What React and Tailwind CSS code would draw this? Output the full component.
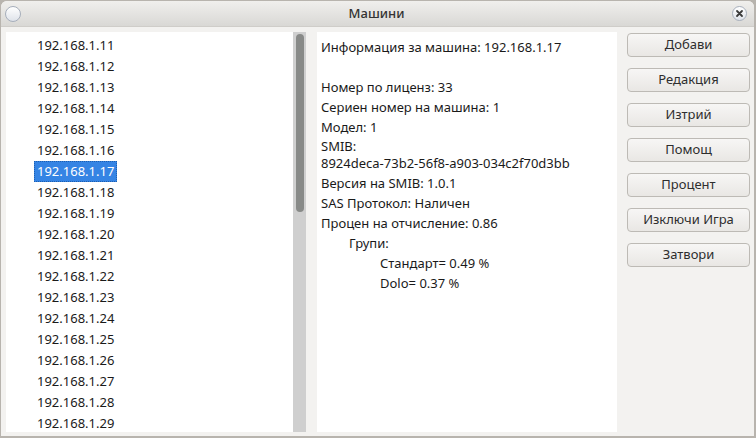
import React from "react";

const ips = Array.from({ length: 19 }, (_, i) => `192.168.1.${11 + i}`);
const buttons = ["Добави", "Редакция", "Изтрий", "Помощ", "Процент", "Изключи Игра", "Затвори"];

const App = () => {
  return (
    <div
      className="w-[756px] h-[438px] bg-[#b8b4ae] p-px pr-[2px] pb-[2px] text-[13px] text-[#1a1a1a]"
      style={{ fontFamily: '"Noto Sans", "Open Sans", sans-serif' }}
    >
      <div className="w-full h-full flex flex-col bg-[#f3f2f0] rounded-t-[6px] overflow-hidden">
        {/* title bar */}
        <div className="h-[26px] flex items-center justify-between px-[4px] bg-gradient-to-b from-[#f0efed] to-[#d9d8d5] border-b border-[#cfcdc9]">
          <div className="w-[16px] h-[16px] rounded-full border border-[#a6aebb] bg-gradient-to-b from-white to-[#dfe3ea]" />
          <div className="text-[13px] text-[#333] font-medium">Машини</div>
          <div className="w-[15px] h-[15px] mr-[3px] rounded-full border border-[#a6aebb] bg-gradient-to-b from-white to-[#dfe3ea] flex items-center justify-center">
            <svg width="9" height="9" viewBox="0 0 9 9">
              <path d="M2 2 L7 7 M7 2 L2 7" stroke="#3a3a3a" strokeWidth="1.8" strokeLinecap="round" />
            </svg>
          </div>
        </div>

        <div className="flex-1 flex pl-[5px] pt-[5px] pb-[4px] min-h-0">
          {/* list */}
          <div className="w-[300px] flex bg-white overflow-hidden">
            <div className="flex-1 pl-[31px] pt-[3px]">
              {ips.map((ip) => (
                <div key={ip} className="h-[21px] flex items-center">
                  {ip === "192.168.1.17" ? (
                    <span className="bg-[#3584e4] text-white px-[2px] -ml-[3px] h-[21px] flex items-center border border-dotted border-[#1d5fb0]">
                      {ip}
                    </span>
                  ) : (
                    <span>{ip}</span>
                  )}
                </div>
              ))}
            </div>
            <div className="w-[13px] bg-[#cfcfcf] flex justify-center pt-[2px]">
              <div className="w-[8px] h-[178px] rounded-full bg-[#888a88]" />
            </div>
          </div>

          {/* info */}
          <div className="w-[300px] ml-[11px] bg-white pl-[4px] pt-[5px] leading-[20px]">
            <div>Информация за машина: 192.168.1.17</div>
            <div className="h-[20px]" />
            <div>Номер по лиценз: 33</div>
            <div>Сериен номер на машина: 1</div>
            <div>Модел: 1</div>
            <div className="leading-[17px] pt-[1px]">SMIB:</div>
            <div className="leading-[17px] pb-[1px]">8924deca-73b2-56f8-a903-034c2f70d3bb</div>
            <div>Версия на SMIB: 1.0.1</div>
            <div>SAS Протокол: Наличен</div>
            <div>Процен на отчисление: 0.86</div>
            <div className="pl-[28px]">Групи:</div>
            <div className="pl-[59px]">Стандарт= 0.49 %</div>
            <div className="pl-[59px]">Dolo= 0.37 %</div>
          </div>

          {/* buttons */}
          <div className="flex flex-col gap-[11px] ml-[10px] pt-[1px]">
            {buttons.map((b) => (
              <button
                key={b}
                className="w-[123px] h-[24px] rounded-[4px] border border-[#bdbab5] bg-gradient-to-b from-[#f7f6f5] to-[#e9e7e4] text-[13px] text-[#2e2e2e] flex items-center justify-center"
              >
                {b}
              </button>
            ))}
          </div>
        </div>
      </div>
    </div>
  );
};

export default App;
